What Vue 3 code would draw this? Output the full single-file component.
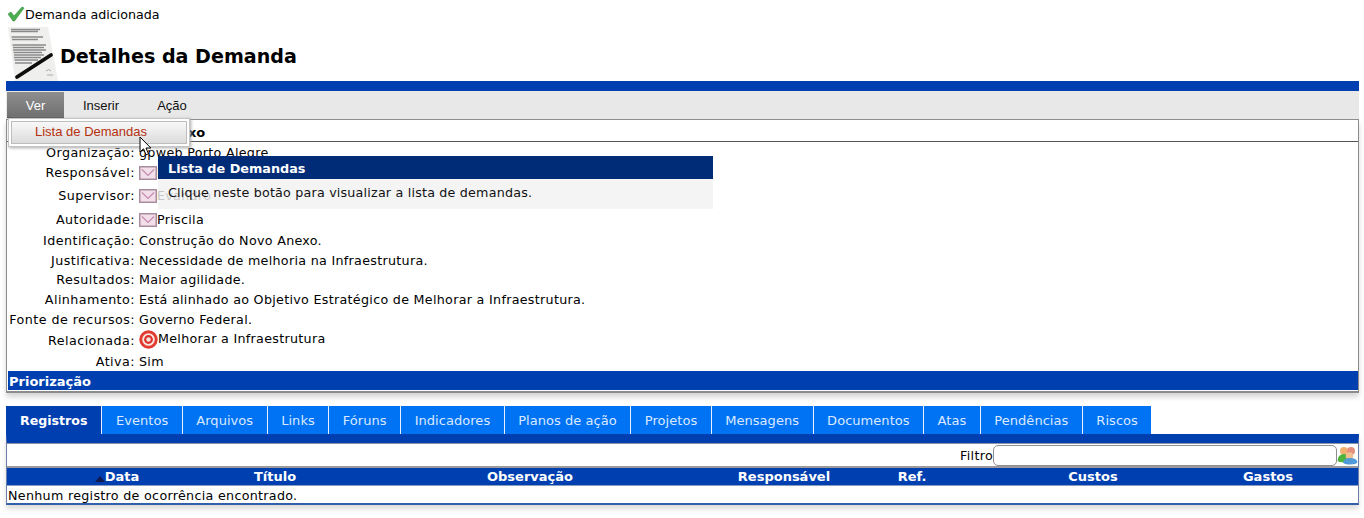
<script setup>
const rows = [
  { label: 'Organização:', value: 'gpweb Porto Alegre', h: 20 },
  { label: 'Responsável:', value: 'Evandro', icon: true, h: 21 },
  { label: 'Supervisor:', value: 'Evandro', icon: true, h: 25 },
  { label: 'Autoridade:', value: 'Priscila', icon: true, h: 22 },
  { label: 'Identificação:', value: 'Construção do Novo Anexo.', h: 20 },
  { label: 'Justificativa:', value: 'Necessidade de melhoria na Infraestrutura.', h: 20 },
  { label: 'Resultados:', value: 'Maior agilidade.', h: 19 },
  { label: 'Alinhamento:', value: 'Está alinhado ao Objetivo Estratégico de Melhorar a Infraestrutura.', h: 20 },
  { label: 'Fonte de recursos:', value: 'Governo Federal.', h: 20 },
  { label: 'Relacionada:', value: 'Melhorar a Infraestrutura', target: true, h: 22 },
  { label: 'Ativa:', value: 'Sim', h: 20 }
]
const tabs = ['Registros', 'Eventos', 'Arquivos', 'Links', 'Fóruns', 'Indicadores', 'Planos de ação', 'Projetos', 'Mensagens', 'Documentos', 'Atas', 'Pendências', 'Riscos']
const cols = [
  { t: 'Título', w: 104 },
  { t: 'Observação', w: 406 },
  { t: 'Responsável', w: 102 },
  { t: 'Ref.', w: 154 },
  { t: 'Custos', w: 208 },
  { t: 'Gastos', w: 142 }
]
</script>

<template>
  <div class="page">
    <div class="msg">
      <svg class="check" width="18" height="16" viewBox="0 0 18 16">
        <path d="M1 8 L4 6 L7 10 L15 1 L17 2 L7.5 15 L6 15 Z" fill="#4cae4f" stroke="#2e8b3a" stroke-width=".6" />
      </svg>
      <span>Demanda adicionada</span>
    </div>

    <div class="head">
      <svg class="doc" width="50" height="54" viewBox="0 0 50 54">
        <path d="M0 0 H40 L50 54 H7 Z" fill="#efefed" />
        <path d="M3 2.500 H32 M3 4.500 H30 M3.500 10 H35 M4 12.500 H30 M4.500 18 H38 M5 20.500 H36 M5 23 H38 M5.500 25.500 H34 M6 28 H36 M6 30.500 H33 M6.500 33 H30 M7 36 H24" stroke="#8a8a8a" stroke-width="1.600" fill="none" />
        <path d="M38 44 q3 -3 5 0 M39 48 h6" stroke="#aaa" stroke-width="1" fill="none" />
        <path d="M9 50 L43 28" stroke="#0d0d0d" stroke-width="3.800" stroke-linecap="round" />
      </svg>
      <h1>Detalhes da Demanda</h1>
    </div>

    <div class="blue-bar"></div>

    <div class="menubar">
      <div class="menu active">Ver</div>
      <div class="menu m2">Inserir</div>
      <div class="menu m3">Ação</div>
    </div>

    <div class="panel">
      <div class="title-row">Construção do Novo Anexo</div>
      <div class="fields">
        <div v-for="r in rows" :key="r.label" class="row" :style="{ height: r.h + 'px' }">
          <div class="label">{{ r.label }}</div>
          <div class="value">
            <svg v-if="r.icon" class="mail" width="18" height="14" viewBox="0 0 18 14">
              <rect x=".75" y=".75" width="16.500" height="12.500" fill="#f3dfe9" stroke="#a98c9f" stroke-width="1.500" />
              <path d="M3 3.500 L9 9.500 L15 3.500" fill="none" stroke="#c48bb0" stroke-width="1.200" />
            </svg>
            <svg v-if="r.target" class="target" width="19" height="19" viewBox="0 0 19 19">
              <circle cx="9.500" cy="9.500" r="9.200" fill="#e23b30" />
              <circle cx="9.500" cy="9.500" r="6.300" fill="#f7e5e2" />
              <circle cx="9.500" cy="9.500" r="4.400" fill="#dd3128" />
              <circle cx="9.500" cy="9.500" r="2.200" fill="#f7e5e2" />
            </svg>
            <span :class="{ up: r.target }">{{ r.value }}</span>
          </div>
        </div>
      </div>
      <div class="section">Priorização</div>
    </div>

    <div class="tabs">
      <div v-for="(t, i) in tabs" :key="t" class="tab" :class="{ on: i === 0 }">{{ t }}</div>
    </div>

    <div class="tabpanel">
      <div class="filter">
        <span>Filtro</span>
        <div class="input"></div>
        <svg class="users" width="21" height="20" viewBox="0 0 21 20">
          <circle cx="7" cy="6" r="4" fill="#f0b070" />
          <circle cx="14" cy="6" r="4" fill="#e58f80" />
          <path d="M0.500 16 q0.500 -7 6.500 -7 q4 0 5 4 l-3 4 q-6 1 -8.500 -1z" fill="#4cb33c" />
          <circle cx="12.500" cy="11" r="3.800" fill="#f2c090" />
          <path d="M6 17.500 q1 -4.500 7 -4.500 q6.500 0 7.500 4 q-1 2.500 -7 2.500 q-6 0 -7.500 -2z" fill="#4f9ad8" />
        </svg>
      </div>
      <div class="thead">
        <div class="th first"><i class="arrow"></i>Data</div>
        <div v-for="c in cols" :key="c.t" class="th" :style="{ width: c.w + 'px' }">{{ c.t }}</div>
      </div>
      <div class="empty">Nenhum registro de ocorrência encontrado.</div>
    </div>

    <div class="dropdown"><div class="drop-item">Lista de Demandas</div></div>
    <svg class="cursor" width="14" height="21" viewBox="0 0 14 21">
      <path d="M1 1 V16 L4.500 12.800 L7 18.800 L9.500 17.800 L7 12 H11.800 Z" fill="#fff" stroke="#000" stroke-width="1" />
    </svg>
    <div class="tip">
      <div class="tip-head">Lista de Demandas</div>
      <div class="tip-body">Clique neste botão para visualizar a lista de demandas.</div>
    </div>
  </div>
</template>

<style scoped>
.page {
  position: relative;
  width: 1364px;
  height: 518px;
  overflow: hidden;
  background: #fff;
  font-family: "DejaVu Sans", Verdana, sans-serif;
  font-size: 12.700px;
  letter-spacing: .3px;
  color: #000;
}
.msg {
  display: flex;
  align-items: center;
  height: 22px;
  padding: 6px 0 0 7px;
  box-sizing: border-box;
  font-size: 12.660px;
  letter-spacing: 0;
}
.check { flex: none; margin-top: -1px; }
.head {
  display: flex;
  height: 59px;
  padding-left: 8px;
}
.doc { flex: none; margin-top: 5px; }
h1 {
  margin: 0;
  padding: 23px 0 0 2px;
  font-size: 19.100px;
  line-height: 23px;
  letter-spacing: 0;
  font-weight: bold;
}
.blue-bar {
  height: 10px;
  width: 1353px;
  margin-left: 6px;
  background: #003fb0;
}
.menubar {
  display: flex;
  height: 29px;
  width: 1353px;
  margin-left: 6px;
  background: #e8e8e8;
  border-bottom: 1px solid #8a8a8a;
  box-sizing: border-box;
  font-family: "Liberation Sans", Arial, sans-serif;
  font-size: 13px;
  letter-spacing: 0;
}
.menu {
  display: flex;
  align-items: center;
  justify-content: center;
  height: 26px;
  margin-top: 1px;
  color: #111;
}
.menu.active {
  width: 57px;
  margin-left: 1px;
  padding-top: 1px;
  background: linear-gradient(#8e8e8e, #707070);
  color: #fff;
  border-bottom: 1px solid #555;
  box-sizing: border-box;
}
.m2 { width: 74px; }
.m3 { width: 34px; margin-left: 17px; }
.panel {
  width: 1353px;
  margin-left: 6px;
  border-left: 1px solid #8c8c8c;
  border-right: 1px solid #8c8c8c;
  border-bottom: 2px solid #8c8c8c;
  box-shadow: 0 4px 5px #d6d6d6;
  height: 273px;
  box-sizing: border-box;
  display: flex;
  flex-direction: column;
}
.title-row {
  flex: none;
  height: 22px;
  box-sizing: border-box;
  border-bottom: 1px solid #555;
  font-weight: bold;
  font-size: 13px;
  letter-spacing: 0;
  line-height: 25px;
  padding-left: 1px;
  white-space: nowrap;
}
.fields { flex: none; }
.row {
  display: flex;
  align-items: center;
}
.label {
  width: 128px;
  text-align: right;
  letter-spacing: .45px;
  white-space: nowrap;
  flex: none;
}
.value {
  padding-left: 4px;
  display: flex;
  align-items: center;
  white-space: nowrap;
}
.mail { flex: none; margin-top: 1px; }
.target { flex: none; margin-top: -1px; }
.up { margin-top: -3px; }
.section {
  flex: none;
  height: 19px;
  margin: 0 0 1px 1px;
  background: #003fb0;
  color: #fff;
  font-weight: bold;
  font-size: 13px;
  letter-spacing: 0;
  line-height: 21px;
  padding-left: 1px;
}
.tabs {
  display: flex;
  margin: 13px 0 0 6px;
  height: 28px;
}
.tab {
  height: 28px;
  line-height: 29px;
  padding: 0 13.500px;
  background: #0073f5;
  color: #dbe9ff;
  font-size: 13px;
  letter-spacing: .045px;
  border-left: 1px solid #e8f0ff;
  white-space: nowrap;
}
.tab.on {
  background: #003fb0;
  color: #fff;
  font-weight: bold;
  border-left: 0;
  padding: 0 14px;
  font-size: 12.600px;
  letter-spacing: 0;
}
.tabpanel {
  margin-left: 6px;
  width: 1353px;
  height: 71px;
  box-sizing: border-box;
  background: #fff;
  border: 1px solid #003fb0;
  border-top: 9px solid #003fb0;
  border-left-color: #6c7fa8;
  border-right-color: #6c7fa8;
  border-bottom: 2px solid #335ea8;
  box-shadow: 0 4px 5px #ddd;
  display: flex;
  flex-direction: column;
}
.filter {
  flex: none;
  display: flex;
  align-items: center;
  justify-content: flex-end;
  border-bottom: 2px solid #9b9b9b;
  border-top: 1px solid #8b93a8;
  height: 22px;
}
.input {
  width: 344px;
  height: 21px;
  box-sizing: border-box;
  border: 1px solid #8f8f8f;
  border-radius: 5px;
}
.users { flex: none; }
.thead {
  display: flex;
  height: 18px;
  flex: none;
  background: #003fb0;
  color: #fff;
  font-weight: bold;
  font-size: 13px;
  letter-spacing: 0;
  line-height: 18px;
  border-bottom: 1px solid #8a9cc0;
  box-sizing: border-box;
}
.th { text-align: center; box-sizing: border-box; }
.th.first {
  width: 216px;
  padding-left: 4px;
}
.arrow {
  display: inline-block;
  width: 0;
  height: 0;
  border-left: 5px solid transparent;
  border-right: 5px solid transparent;
  border-bottom: 6px solid #101a50;
  vertical-align: -1px;
}
.empty {
  line-height: 17px;
  padding: 1px 0 0 1px;
}
.dropdown {
  position: absolute;
  left: 8px;
  top: 118px;
  width: 182px;
  height: 29px;
  box-sizing: border-box;
  background: #fff;
  border: 1px solid #c4c4c4;
  padding: 2px;
  box-shadow: 1px 1px 3px #aaa;
}
.drop-item {
  height: 23px;
  background: linear-gradient(#f8f8f8, #dcdcdc);
  border: 1px solid #bdbdbd;
  box-sizing: border-box;
  color: #b5300f;
  font-family: "Liberation Sans", Arial, sans-serif;
  font-size: 13px;
  letter-spacing: 0;
  line-height: 19px;
  padding-left: 23px;
}
.cursor {
  position: absolute;
  left: 139px;
  top: 136px;
}
.tip {
  position: absolute;
  left: 158px;
  top: 156px;
  width: 555px;
  height: 53px;
  display: flex;
  flex-direction: column;
}
.tip-head {
  flex: none;
  height: 23px;
  background: #002b77;
  color: #fff;
  font-weight: bold;
  font-size: 12.800px;
  letter-spacing: 0;
  line-height: 25px;
  padding-left: 10px;
}
.tip-body {
  flex: 1;
  background: rgba(242, 242, 243, .82);
  letter-spacing: .2px;
  line-height: 28px;
  padding-left: 10px;
  color: #111;
}
</style>
